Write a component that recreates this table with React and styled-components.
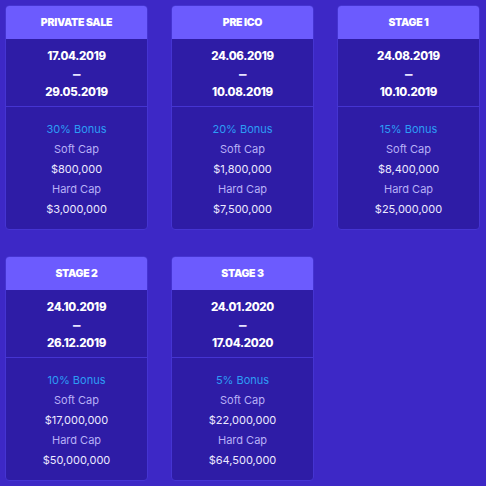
import React from 'react';
import styled, { createGlobalStyle } from 'styled-components';

const Global = createGlobalStyle`
  html, body {
    margin: 0;
    padding: 0;
    background: #3d28c6;
  }
  body {
    font-family: Inter, "Noto Sans", sans-serif;
  }
`;

const Page = styled.div`
  width: 486px;
  height: 486px;
  box-sizing: border-box;
  padding: 5px 6px 0 5px;
  background: #3d28c6;
  display: grid;
  grid-template-columns: repeat(3, 143px);
  grid-auto-rows: 225px;
  column-gap: 23px;
  row-gap: 26px;
`;

const Card = styled.div`
  display: flex;
  flex-direction: column;
  background: #2e1ca6;
  border: 1px solid #4534d2;
  border-radius: 4px;
  overflow: hidden;
  box-sizing: border-box;
`;

const Head = styled.div`
  height: 34px;
  background: #6c5bfe;
  color: #fff;
  font-size: 10.5px;
  font-weight: 900;
  letter-spacing: -0.3px;
  display: flex;
  align-items: center;
  justify-content: center;
  margin: -1px -1px 0;
`;

const Dates = styled.div`
  display: flex;
  flex-direction: column;
  align-items: center;
  padding: 8px 0 5px;
  border-bottom: 1px solid #4534d2;
  color: #fff;
  font-size: 11.5px;
  font-weight: 800;
  line-height: 18px;
  letter-spacing: -0.3px;
`;

const Dash = styled.div`
  font-size: 15px;
  font-weight: 700;
  color: #e6e2ff;
`;

const Body = styled.div`
  display: flex;
  flex-direction: column;
  align-items: center;
  padding: 12px 0 0;
  font-size: 11px;
  line-height: 20px;
`;

const Bonus = styled.div`
  color: #2d9cf5;
`;

const Label = styled.div`
  color: #b8b0f6;
`;

const Value = styled.div`
  color: #ece9ff;
`;

const stages = [
  { title: 'PRIVATE SALE', from: '17.04.2019', to: '29.05.2019', bonus: '30%', soft: '$800,000', hard: '$3,000,000' },
  { title: 'PRE ICO', from: '24.06.2019', to: '10.08.2019', bonus: '20%', soft: '$1,800,000', hard: '$7,500,000' },
  { title: 'STAGE 1', from: '24.08.2019', to: '10.10.2019', bonus: '15%', soft: '$8,400,000', hard: '$25,000,000' },
  { title: 'STAGE 2', from: '24.10.2019', to: '26.12.2019', bonus: '10%', soft: '$17,000,000', hard: '$50,000,000' },
  { title: 'STAGE 3', from: '24.01.2020', to: '17.04.2020', bonus: '5%', soft: '$22,000,000', hard: '$64,500,000' },
];

export default function App() {
  return (
    <>
      <Global />
      <Page>
        {stages.map((s) => (
          <Card key={s.title}>
            <Head>{s.title}</Head>
            <Dates>
              <div>{s.from}</div>
              <Dash>–</Dash>
              <div>{s.to}</div>
            </Dates>
            <Body>
              <Bonus>{s.bonus} Bonus</Bonus>
              <Label>Soft Cap</Label>
              <Value>{s.soft}</Value>
              <Label>Hard Cap</Label>
              <Value>{s.hard}</Value>
            </Body>
          </Card>
        ))}
      </Page>
    </>
  );
}
